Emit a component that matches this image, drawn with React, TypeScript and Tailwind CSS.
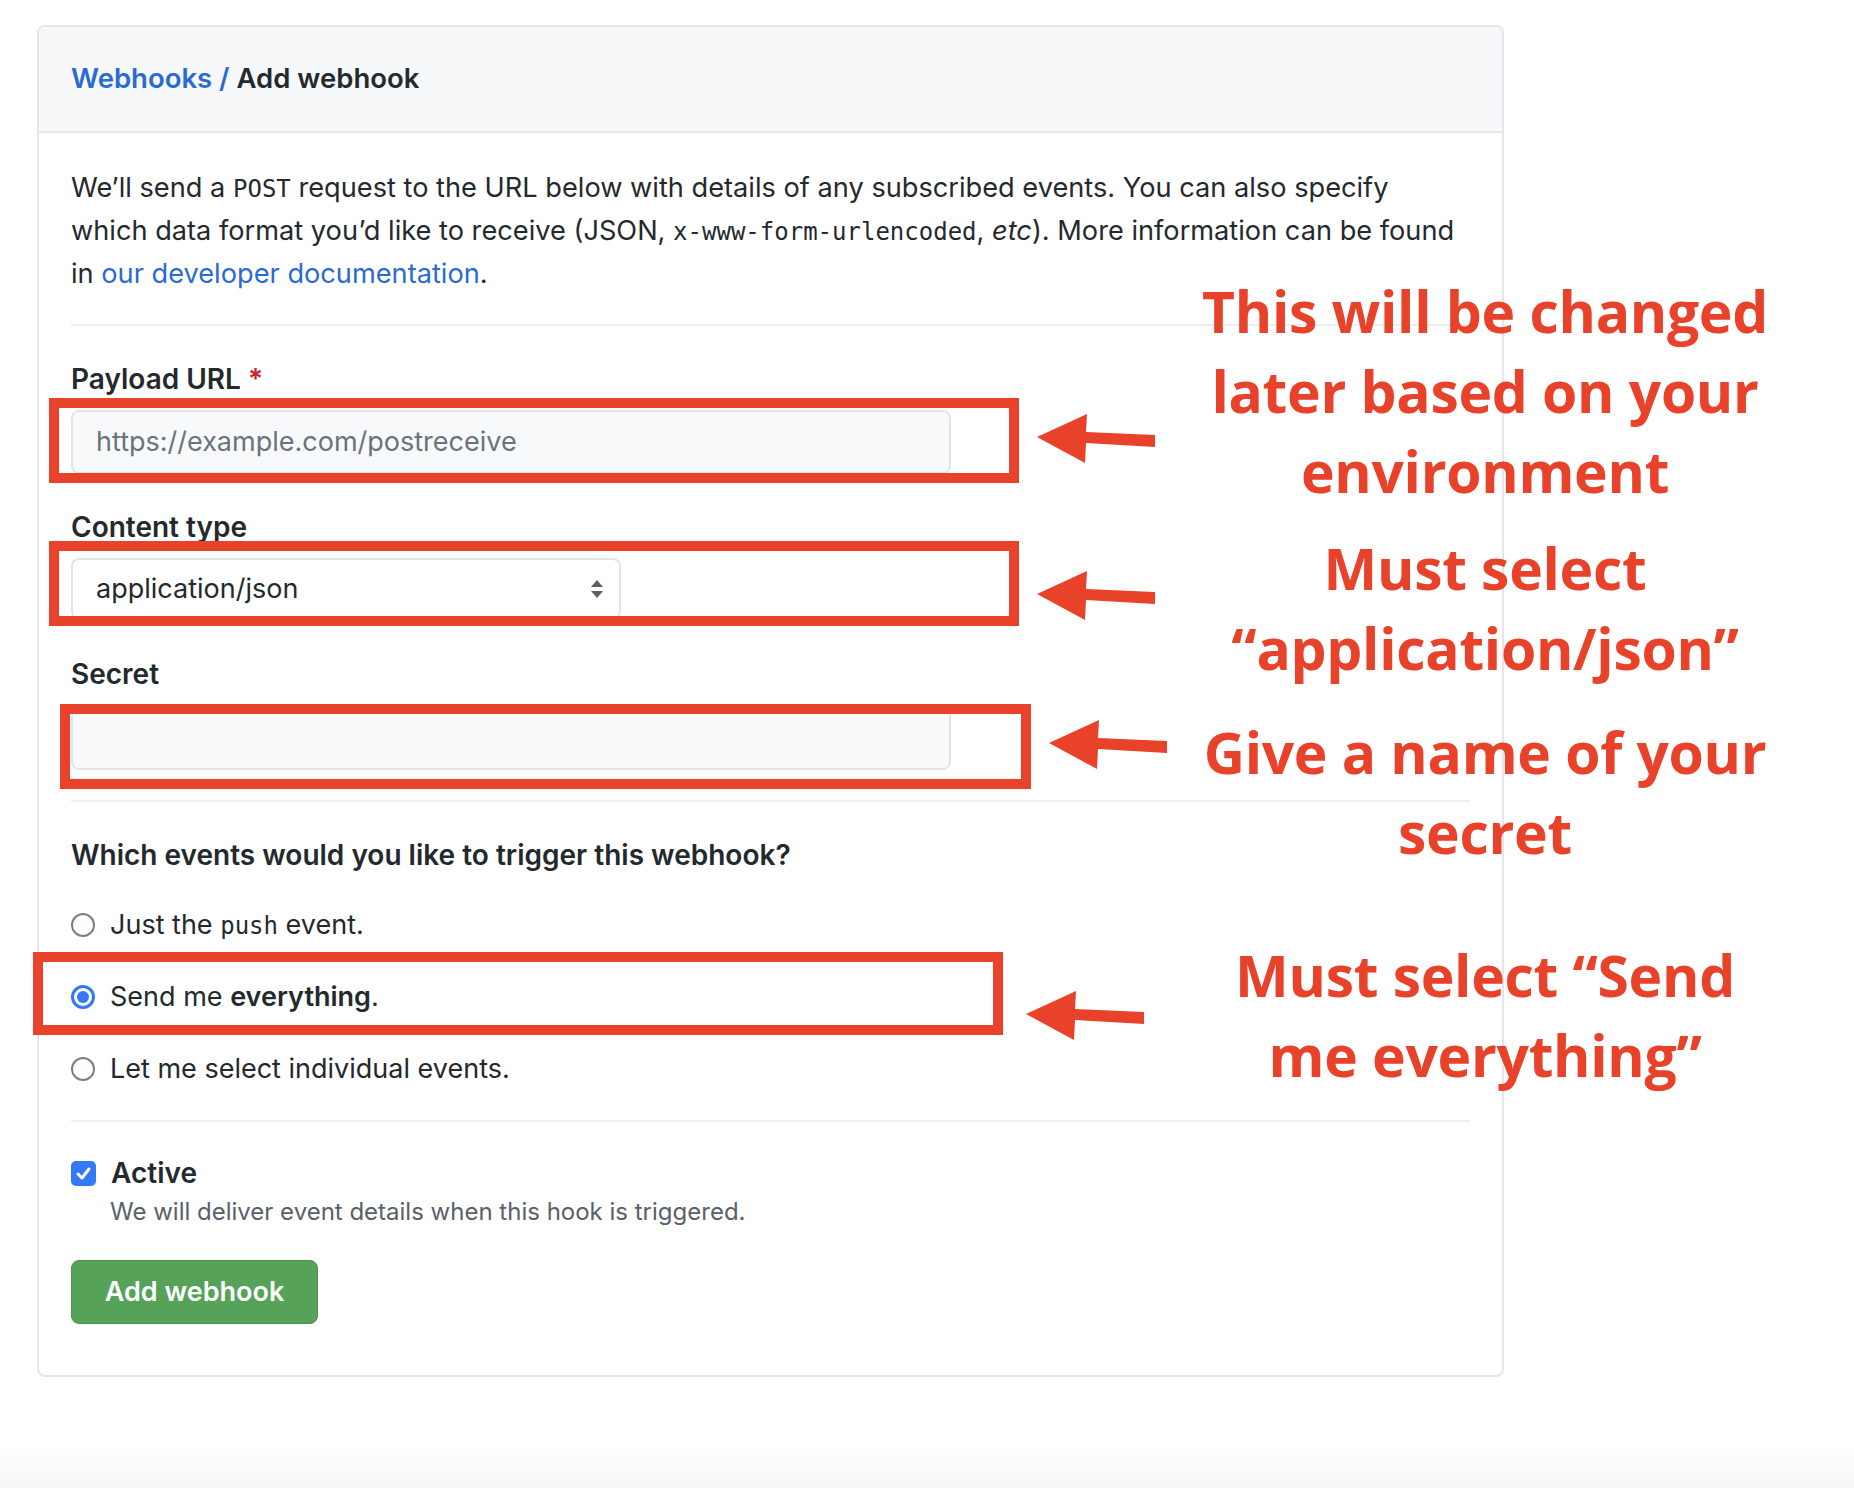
import React from "react";

const sans = { fontFamily: "Inter, 'Liberation Sans', Arial, sans-serif" };
const mono = { fontFamily: "'DejaVu Sans Mono', 'Liberation Mono', monospace" };
const note = { fontFamily: "'Open Sans', Lato, sans-serif" };

function Arrow({ left, top }: { left: number; top: number }) {
  return (
    <svg
      className="absolute"
      style={{ left, top }}
      width="122"
      height="52"
      viewBox="0 0 122 52"
    >
      <polygon
        points="0,23 50,0 49,18 118,21 118,33 49,29 48,49"
        fill="#e8422b"
      />
    </svg>
  );
}

function RedBox({ left, top, width, height }: { left: number; top: number; width: number; height: number }) {
  return (
    <div
      className="absolute border-[10px] border-[#e8422b] pointer-events-none"
      style={{ left, top, width, height }}
    />
  );
}

function Radio({ checked }: { checked?: boolean }) {
  if (checked) {
    return (
      <span className="w-6 h-6 rounded-full border-[3px] border-[#3478f6] flex items-center justify-center shrink-0">
        <span className="w-3 h-3 rounded-full bg-[#3478f6]" />
      </span>
    );
  }
  return <span className="w-6 h-6 rounded-full border-2 border-[#7b7f85] bg-white shrink-0" />;
}

const noteCls =
  "absolute left-[1185px] w-[600px] text-center text-[#e8422b] font-bold text-[57px] leading-[80px] tracking-[-0.3px]";

export default function App() {
  return (
    <div className="relative h-[1488px] w-full bg-white flex flex-col text-[#24292e]" style={sans}>
      <div className="ml-[37px] mt-[25px] w-[1467px] border-2 border-[#e4e6e9] rounded-[8px] overflow-hidden">
        <div className="h-[106px] bg-[#f6f8fa] border-b-2 border-[#e4e6e9] flex items-center px-[32px]">
          <span className="text-[27.5px] font-semibold">
            <span className="text-[#2a6bd1]">Webhooks /</span> Add webhook
          </span>
        </div>

        <div className="px-[32px] pt-[34px] pb-[51px] flex flex-col">
          <p className="text-[27.2px] leading-[42px]">
            We’ll send a <span style={mono} className="text-[24px]">POST</span> request to the URL below with details of any subscribed events. You can also specify
            <br />
            which data format you’d like to receive (JSON, <span style={mono} className="text-[24px]">x-www-form-urlencoded</span>, <em>etc</em>). More information can be found
            <br />
            in <span className="text-[#2a6bd1]">our developer documentation</span>.
          </p>

          <div className="mt-[29px] h-[2px] bg-[#eceef1]" />

          <label className="mt-[35px] text-[28px] leading-[36px] font-semibold">
            Payload URL <span className="text-[#cb2431]">*</span>
          </label>
          <div className="mt-[13px] h-[64px] w-[880px] rounded-[8px] border-2 border-[#e1e4e8] bg-[#f8f9fb] flex items-center px-[23px] text-[27px] text-[#6a737d]">
            https://example.com/postreceive
          </div>

          <label className="mt-[35px] text-[28px] leading-[36px] font-semibold">Content type</label>
          <div className="mt-[13px] h-[62px] w-[550px] rounded-[8px] border-2 border-[#e1e4e8] bg-white flex items-center justify-between pl-[23px] pr-[14px] text-[27px]">
            <span>application/json</span>
            <svg width="16" height="22" viewBox="0 0 16 22">
              <polygon points="8,2 14,9 2,9" fill="#5b6068" />
              <polygon points="2,13 14,13 8,20" fill="#5b6068" />
            </svg>
          </div>

          <label className="mt-[36px] text-[28px] leading-[36px] font-semibold">Secret</label>
          <div className="mt-[14px] h-[64px] w-[880px] rounded-[8px] border-2 border-[#e1e4e8] bg-[#f8f9fb]" />

          <div className="mt-[30px] h-[2px] bg-[#eceef1]" />

          <div className="mt-[35px] text-[28px] leading-[36px] font-semibold">
            Which events would you like to trigger this webhook?
          </div>

          <div className="mt-[16px] flex flex-col">
            <div className="h-[72px] flex items-center gap-[15px] text-[27px]">
              <Radio />
              <span>
                Just the <span style={mono} className="text-[24px]">push</span> event.
              </span>
            </div>
            <div className="h-[72px] flex items-center gap-[15px] text-[27px]">
              <Radio checked />
              <span>
                Send me <span className="font-semibold">everything</span>.
              </span>
            </div>
            <div className="h-[72px] flex items-center gap-[15px] text-[27px]">
              <Radio />
              <span>Let me select individual events.</span>
            </div>
          </div>

          <div className="mt-[15px] h-[2px] bg-[#eceef1]" />

          <div className="mt-[33px] h-[36px] flex items-center gap-[15px]">
            <span className="w-[25px] h-[25px] rounded-[5px] bg-[#3478f6] flex items-center justify-center">
              <svg width="17" height="17" viewBox="0 0 17 17">
                <path d="M3 9 L7 13 L14 4" stroke="white" strokeWidth="3" fill="none" strokeLinecap="round" strokeLinejoin="round" />
              </svg>
            </span>
            <span className="text-[28px] font-semibold">Active</span>
          </div>
          <div className="mt-[7px] ml-[39px] text-[24px] leading-[28px] text-[#586069]">
            We will deliver event details when this hook is triggered.
          </div>

          <div className="mt-[34px]">
            <button className="h-[64px] w-[247px] rounded-[8px] bg-[#56a259] border border-[#4b9250] text-white text-[27px] font-semibold">
              Add webhook
            </button>
          </div>
        </div>
      </div>

      <div className="flex-1" />
      <div className="h-[44px] bg-gradient-to-b from-white to-[#f6f6f6]" />

      <RedBox left={49} top={398} width={970} height={85} />
      <RedBox left={49} top={541} width={970} height={85} />
      <RedBox left={60} top={704} width={971} height={85} />
      <RedBox left={33} top={952} width={970} height={83} />

      <Arrow left={1037} top={414} />
      <Arrow left={1037} top={571} />
      <Arrow left={1049} top={720} />
      <Arrow left={1026} top={991} />

      <div className={noteCls} style={{ ...note, top: 271 }}>
        This will be changed<br />later based on your<br />environment
      </div>
      <div className={noteCls} style={{ ...note, top: 528 }}>
        Must select<br />“application/json”
      </div>
      <div className={noteCls} style={{ ...note, top: 712 }}>
        Give a name of your<br />secret
      </div>
      <div className={noteCls} style={{ ...note, top: 935 }}>
        Must select “Send<br />me everything”
      </div>
    </div>
  );
}
